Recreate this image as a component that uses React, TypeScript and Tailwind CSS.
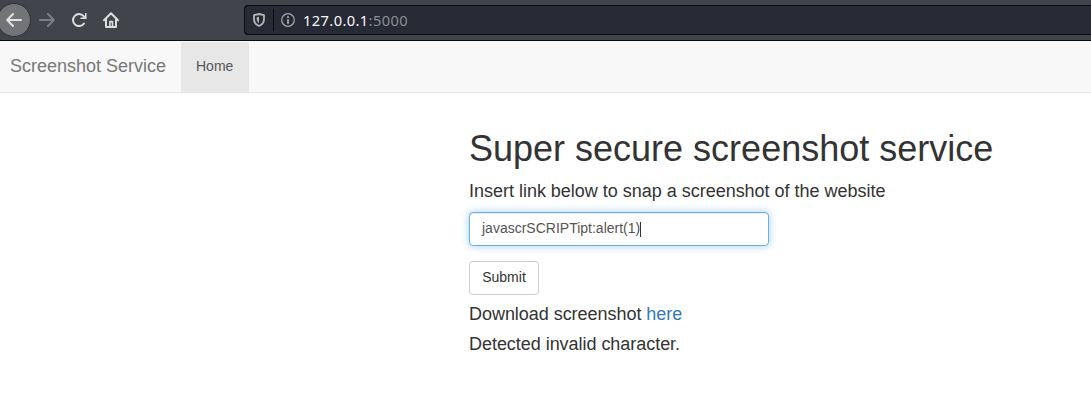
function BrowserBar() {
  return (
    <header className="flex h-[41px] items-start overflow-hidden border-b border-[#0c0c0d] bg-[#42444b]">
      <div className="-ml-[3px] mt-[3px] flex size-[34px] shrink-0 items-center justify-center rounded-full border border-[#2f3136] bg-[#737477]">
        <svg className="size-4" viewBox="0 0 16 16" fill="none" stroke="#e2e2df" strokeWidth="2" strokeLinecap="round" strokeLinejoin="round">
          <path d="M15 8H1.5M7 2 1.2 8 7 14" />
        </svg>
      </div>
      <svg className="ml-[8px] mt-3 size-4 shrink-0" viewBox="0 0 16 16" fill="none" stroke="#7e7f82" strokeWidth="2" strokeLinecap="round" strokeLinejoin="round">
        <path d="M1 8h13.5M9 2l5.8 6L9 14" />
      </svg>
      <svg className="ml-4 mt-3 size-4 shrink-0" viewBox="0 0 16 16" fill="none" stroke="#deded9" strokeWidth="2" strokeLinecap="round">
        <path d="M13 11.500A6 6 0 1 1 12.600 4.200" />
        <path d="M15.500 1v6H9.500V5.500H12L14 3.500V1Z" fill="#deded9" stroke="none" />
      </svg>
      <svg className="ml-4 mt-3 size-4 shrink-0" viewBox="0 0 16 16" fill="none" stroke="#deded9" strokeWidth="2" strokeLinecap="round" strokeLinejoin="round">
        <path d="M1 8.2 8 1.3l7 6.9M3 7.5V15h10V7.5" />
        <path d="M6.9 15V9.6h2.6V15" strokeWidth="1.6" />
      </svg>
      <div className="ml-[125px] mt-[5px] flex h-[30px] flex-1 items-center rounded-l-[4px] border border-r-0 border-[#0c0c0d] bg-[#272935]">
        <svg className="ml-[8px] h-[14px] w-[12px]" viewBox="0 0 12 14" fill="none" stroke="#b5b5b4" strokeWidth="1.8" strokeLinejoin="round">
          <path d="M6 1 11 2.2V6c0 3.3-1.6 5.6-5 7C2.600 11.600 1 9.300 1 6V2.200Z" />
          <path d="M6 3.800v6.400C4.300 9 3.700 7.900 3.700 6V4.300Z" fill="#b5b5b4" stroke="none" />
        </svg>
        <div className="ml-[8px] h-[22px] w-px bg-[#0c0c0d]" />
        <svg className="ml-[7px] size-[14px]" viewBox="0 0 14 14" fill="none" stroke="#a9a9aa" strokeWidth="1.2">
          <circle cx="7" cy="7" r="6.300" />
          <path d="M7 6.200v4.600M7 3.200v1.800" strokeWidth="1.800" />
        </svg>
        <p className="ml-[8px] font-['Noto_Sans',sans-serif] text-[14.67px] leading-5 tracking-[0.39px] text-[#8b8c92]">
          <span className="text-[#f9f9fa]">127.0.0.1</span>:5000
        </p>
      </div>
    </header>
  );
}

export default function App() {
  return (
    <div className="h-[405px] overflow-hidden bg-white font-['Liberation_Sans',Arial,sans-serif] text-sm text-[#333]">
      <BrowserBar />
      <nav className="flex h-[52px] items-stretch border-b border-[#e7e7e7] bg-[#f8f8f8]">
        <a className="w-[181px] pl-[10px] pt-[15px] text-lg leading-5 text-[#777]">Screenshot Service</a>
        <a className="mt-px w-[68px] bg-[#e7e7e7] px-[15px] pt-[14px] leading-5 text-[#555]">Home</a>
      </nav>
      <main className="ml-[469px] pt-9">
        <h1 className="whitespace-nowrap text-[36px] leading-10">Super secure screenshot service</h1>
        <h4 className="mt-[12px] text-lg leading-5 tracking-[-0.015px]">Insert link below to snap a screenshot of the website</h4>
        <div className="mt-[11px] flex h-[34px] w-[300px] items-center rounded-[4px] border border-[#66afe9] bg-white px-3 text-[#555] shadow-[inset_0_1px_1px_rgba(0,0,0,.075),0_0_8px_rgba(102,175,233,.6)]">
          <span className="pb-0.5">javascrSCRIPTipt:alert(1)</span>
          <span className="h-[15px] w-px bg-[#333]" />
        </div>
        <button className="mt-[15px] block h-[34px] w-[70px] rounded-[4px] border border-[#ccc] bg-white pb-0.5">Submit</button>
        <h4 className="mt-[9px] text-lg leading-5 tracking-[-0.04px]">
          Download screenshot <a className="text-[#337ab7]">here</a>
        </h4>
        <h4 className="mt-[10px] text-lg leading-5 tracking-[-0.04px]">Detected invalid character.</h4>
      </main>
    </div>
  );
}
